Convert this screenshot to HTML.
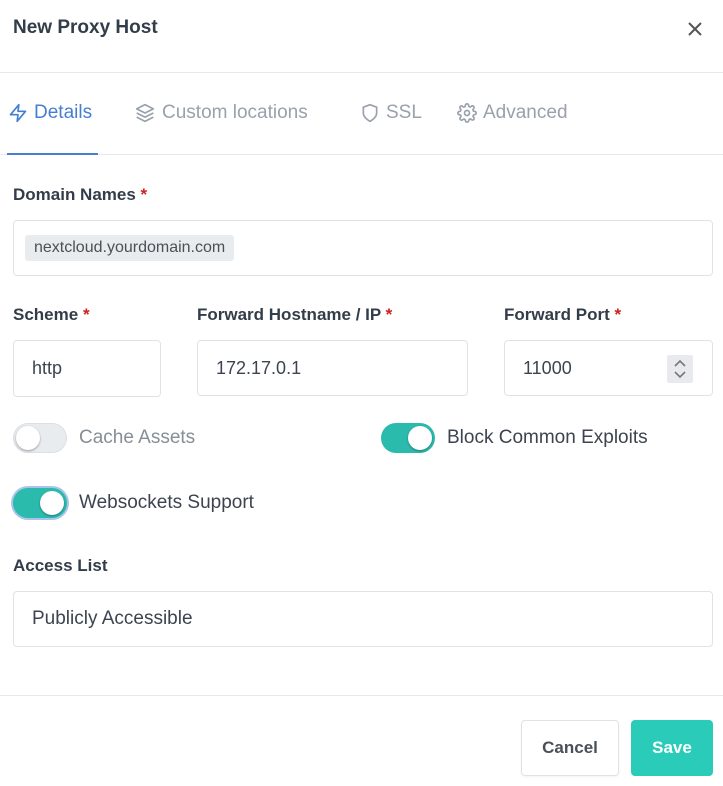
<!DOCTYPE html>
<html><head><style>
*{box-sizing:border-box;margin:0;padding:0}
body{width:723px;height:786px;background:#fff;font-family:"Liberation Sans",sans-serif;color:#354052;position:relative;overflow:hidden}
.a{position:absolute}
.lbl{font-weight:bold;font-size:17px;color:#333d4a}
.lbl b{color:#cd201f}
.inp{position:absolute;border:1px solid #dfe3e8;border-radius:4px;background:#fff;font-size:18px;color:#3d4450;padding-left:18px;display:flex;align-items:center}
.tab{position:absolute;top:102px;font-size:19px;color:#9aa0ac;display:flex;align-items:center;gap:6px}
.tog{position:absolute;width:54px;height:30px;border-radius:15px}
.tog i{position:absolute;top:3px;width:24px;height:24px;border-radius:50%;background:#fff;box-shadow:0 1px 2px rgba(0,0,0,.35)}
.tl{position:absolute;font-size:19px}
</style></head><body>
<div class="a" style="left:13px;top:17px;font-size:19px;font-weight:bold;color:#333d4a">New Proxy Host</div>
<svg class="a" style="left:686px;top:20px" width="18" height="18" viewBox="0 0 18 18"><path d="M3 3L15 15M15 3L3 15" stroke="#555" stroke-width="2"/></svg>
<div class="a" style="left:0;top:72px;width:723px;height:1px;background:#e6e8eb"></div>
<div class="tab" style="left:8px;color:#467fcf"><svg width="20" height="20" viewBox="0 0 24 24" fill="none" stroke="#467fcf" stroke-width="2" stroke-linejoin="round"><path d="M13 2L3 14h9l-1 8 10-12h-9l1-8z"/></svg>Details</div>
<div class="tab" style="left:134px"><svg width="22" height="20" viewBox="0 0 24 24" fill="none" stroke="#9aa0ac" stroke-width="2" stroke-linejoin="round"><path d="M12 2L2 7l10 5 10-5-10-5zM2 17l10 5 10-5M2 12l10 5 10-5"/></svg>Custom locations</div>
<div class="tab" style="left:360px"><svg width="20" height="20" viewBox="0 0 24 24" fill="none" stroke="#9aa0ac" stroke-width="2"><path d="M12 22s8-4 8-10V5l-8-3-8 3v7c0 6 8 10 8 10z"/></svg>SSL</div>
<div class="tab" style="left:457px"><svg width="20" height="20" viewBox="0 0 24 24" fill="none" stroke="#9aa0ac" stroke-width="2"><circle cx="12" cy="12" r="3"/><path d="M19.4 15a1.7 1.7 0 0 0 .3 1.8l.1.1a2 2 0 1 1-2.8 2.8l-.1-.1a1.7 1.7 0 0 0-1.8-.3 1.7 1.7 0 0 0-1 1.5V21a2 2 0 1 1-4 0v-.1a1.7 1.7 0 0 0-1.1-1.5 1.7 1.7 0 0 0-1.8.3l-.1.1a2 2 0 1 1-2.8-2.8l.1-.1a1.7 1.7 0 0 0 .3-1.8 1.7 1.7 0 0 0-1.5-1H3a2 2 0 1 1 0-4h.1a1.7 1.7 0 0 0 1.5-1.1 1.7 1.7 0 0 0-.3-1.8l-.1-.1a2 2 0 1 1 2.8-2.8l.1.1a1.7 1.7 0 0 0 1.8.3H9a1.7 1.7 0 0 0 1-1.5V3a2 2 0 1 1 4 0v.1a1.7 1.7 0 0 0 1 1.5 1.7 1.7 0 0 0 1.8-.3l.1-.1a2 2 0 1 1 2.8 2.8l-.1.1a1.7 1.7 0 0 0-.3 1.8V9a1.7 1.7 0 0 0 1.5 1H21a2 2 0 1 1 0 4h-.1a1.7 1.7 0 0 0-1.5 1z"/></svg>Advanced</div>
<div class="a" style="left:0;top:154px;width:723px;height:1px;background:#e6e8eb"></div>
<div class="a" style="left:7px;top:153px;width:91px;height:2px;background:#467fcf"></div>

<div class="a lbl" style="left:13px;top:185px">Domain Names <b>*</b></div>
<div class="inp" style="left:13px;top:220px;width:700px;height:56px;padding-left:11px"><span style="background:#e9ecef;border-radius:3px;padding:4px 9px;font-size:16px;color:#495057">nextcloud.yourdomain.com</span></div>

<div class="a lbl" style="left:13px;top:305px">Scheme <b>*</b></div>
<div class="a lbl" style="left:197px;top:305px">Forward Hostname / IP <b>*</b></div>
<div class="a lbl" style="left:504px;top:305px">Forward Port <b>*</b></div>
<div class="inp" style="left:13px;top:340px;width:148px;height:57px">http</div>
<div class="inp" style="left:197px;top:340px;width:271px;height:56px">172.17.0.1</div>
<div class="inp" style="left:504px;top:340px;width:209px;height:56px">11000
<div class="a" style="left:162px;top:14px;width:26px;height:28px;background:#e9eaee;border-radius:2px"><svg width="26" height="28" viewBox="0 0 26 28"><path d="M8 11l5-5 5 5M8 17l5 5 5-5" fill="none" stroke="#777" stroke-width="1.6"/></svg></div></div>

<div class="tog" style="left:13px;top:423px;background:#e9ecef;border:1px solid #dcdfe4"><i style="left:2px;top:2px"></i></div>
<div class="tl" style="left:79px;top:427px;color:#868e96">Cache Assets</div>
<div class="tog" style="left:381px;top:423px;background:#2bbbad"><i style="left:27px"></i></div>
<div class="tl" style="left:447px;top:427px;color:#3d4450">Block Common Exploits</div>
<div class="tog" style="left:13px;top:488px;background:#2bbbad;box-shadow:0 0 0 2px #a8c4ea"><i style="left:27px"></i></div>
<div class="tl" style="left:79px;top:492px;color:#3d4450">Websockets Support</div>

<div class="a lbl" style="left:13px;top:556px">Access List</div>
<div class="inp" style="left:13px;top:591px;width:700px;height:56px;font-size:19px">Publicly Accessible</div>

<div class="a" style="left:0;top:695px;width:723px;height:1px;background:#e6e8eb"></div>
<div class="a" style="left:521px;top:720px;width:98px;height:56px;border:1px solid #dfe3e8;border-radius:4px;display:flex;align-items:center;justify-content:center;font-weight:bold;font-size:17px;color:#495057;box-shadow:0 1px 2px rgba(0,0,0,.05)">Cancel</div>
<div class="a" style="left:631px;top:720px;width:82px;height:56px;background:#2bcbba;border-radius:4px;display:flex;align-items:center;justify-content:center;font-weight:bold;font-size:17px;color:#fff">Save</div>
</body></html>
